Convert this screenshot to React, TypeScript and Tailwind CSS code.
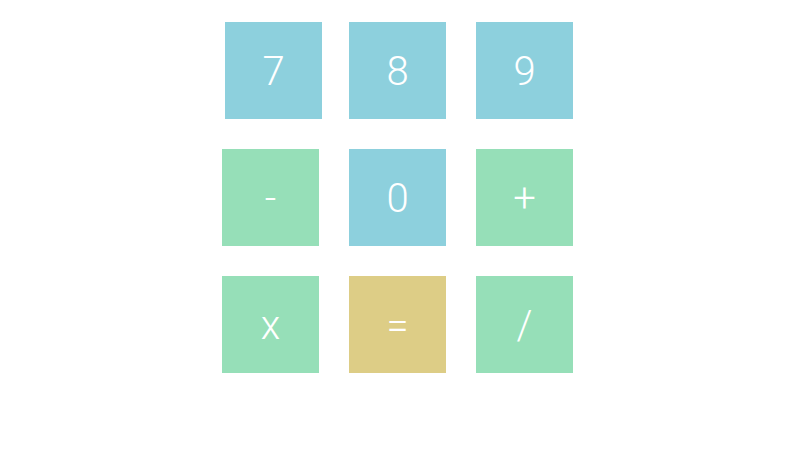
import React from "react";

type Key = { label: string; tone: "num" | "op" | "eq"; shift?: boolean };

const rows: Key[][] = [
  [
    { label: "7", tone: "num", shift: true },
    { label: "8", tone: "num" },
    { label: "9", tone: "num" },
  ],
  [
    { label: "-", tone: "op" },
    { label: "0", tone: "num" },
    { label: "+", tone: "op" },
  ],
  [
    { label: "x", tone: "op" },
    { label: "=", tone: "eq" },
    { label: "/", tone: "op" },
  ],
];

const toneClass: Record<Key["tone"], string> = {
  num: "bg-[#8dd0dd]",
  op: "bg-[#96dfb8]",
  eq: "bg-[#ddcd86]",
};

export default function App() {
  return (
    <div
      className="w-[800px] h-[450px] bg-white pt-[22px] flex flex-col gap-[30px]"
      style={{ fontFamily: "Roboto, 'Liberation Sans', sans-serif" }}
    >
      {rows.map((row, i) => (
        <div key={i} className="flex pl-[222px] gap-[30px]">
          {row.map((k) => (
            <button
              key={k.label}
              className={`w-[97px] h-[97px] pt-[3px] flex items-center justify-center text-white text-[40px] font-light leading-none ${toneClass[k.tone]} ${k.shift ? "ml-[3px] -mr-[3px]" : ""}`}
            >
              {k.label}
            </button>
          ))}
        </div>
      ))}
    </div>
  );
}
